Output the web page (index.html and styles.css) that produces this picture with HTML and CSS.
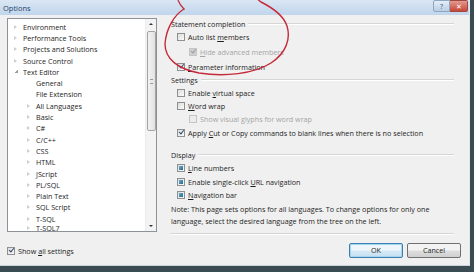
FILE: index.html
```html
<!DOCTYPE html>
<html lang="en">
<head>
    <meta charset="UTF-8">
    <meta name="viewport" content="width=device-width, initial-scale=1.0">
    <title>Options</title>

    <link rel="stylesheet" href="styles.css">
</head>
<body>

    <div class="window">
        <div class="titlebar">
            <span class="title">Options</span>
            <div class="caption-btns">
                <span class="cap-btn help">?</span>
                <span class="cap-btn close">&#x2715;</span>
            </div>
        </div>

        <div class="client">
            <!-- left: tree + show all -->
            <div class="left">
                <div class="tree">
                    <ul class="items">
                        <li class="node"><i class="arrow"></i>Environment</li>
                        <li class="node"><i class="arrow"></i>Performance Tools</li>
                        <li class="node"><i class="arrow"></i>Projects and Solutions</li>
                        <li class="node"><i class="arrow"></i>Source Control</li>
                        <li class="node"><i class="arrow open"></i>Text Editor</li>
                        <li class="child"><i class="arrow none"></i>General</li>
                        <li class="child"><i class="arrow none"></i>File Extension</li>
                        <li class="child"><i class="arrow"></i>All Languages</li>
                        <li class="child"><i class="arrow"></i>Basic</li>
                        <li class="child"><i class="arrow"></i>C#</li>
                        <li class="child"><i class="arrow"></i>C/C++</li>
                        <li class="child"><i class="arrow"></i>CSS</li>
                        <li class="child"><i class="arrow"></i>HTML</li>
                        <li class="child"><i class="arrow"></i>JScript</li>
                        <li class="child"><i class="arrow"></i>PL/SQL</li>
                        <li class="child"><i class="arrow"></i>Plain Text</li>
                        <li class="child"><i class="arrow"></i>SQL Script</li>
                        <li class="child"><i class="arrow"></i>T-SQL</li>
                        <li class="child last"><i class="arrow"></i>T-SQL7</li>
                    </ul>
                    <div class="scrollbar">
                        <span class="sb-arrow up"></span>
                        <div class="sb-track">
                            <div class="sb-thumb"><span class="grip"></span></div>
                        </div>
                        <span class="sb-arrow down"></span>
                    </div>
                </div>
                <label class="check show-all"><span class="box checked"></span><span>Show <u>a</u>ll settings</span></label>
            </div>

            <!-- right: option groups -->
            <div class="right">
                <div class="group first">
                    <div class="heading">Statement completion</div>
                    <label class="check tall"><span class="box"></span><span>Auto list <u>m</u>embers</span></label>
                    <label class="check tall sub disabled"><span class="box checked"></span><span><u>H</u>ide advanced members</span></label>
                    <label class="check tall"><span class="box checked"></span><span><u>P</u>arameter information</span></label>
                </div>

                <div class="group">
                    <div class="heading">Settings</div>
                    <label class="check"><span class="box"></span><span>Enable <u>v</u>irtual space</span></label>
                    <label class="check"><span class="box"></span><span><u>W</u>ord wrap</span></label>
                    <label class="check sub disabled"><span class="box"></span><span>Show visual glyphs for word wrap</span></label>
                    <label class="check"><span class="box checked"></span><span>Apply <u>C</u>ut or Copy commands to blank lines when there is no selection</span></label>
                </div>

                <div class="group display">
                    <div class="heading">Display</div>
                    <label class="check"><span class="box mixed"></span><span><u>L</u>ine numbers</span></label>
                    <label class="check"><span class="box mixed"></span><span>Enable single-click <u>U</u>RL navigation</span></label>
                    <label class="check"><span class="box mixed"></span><span><u>N</u>avigation bar</span></label>
                </div>

                <p class="note">Note: This page sets options for all languages. To change options for only one<br>language, select the desired language from the tree on the left.</p>

                <div class="separator"></div>

                <div class="buttons">
                    <button class="default">OK</button>
                    <button>Cancel</button>
                </div>
            </div>
        </div>

        <!-- red marker circle drawn over the dialog -->
        <svg class="scribble" width="474" height="272" viewBox="0 0 474 272">
            <path d="M184 9 C174 15 166 29 165 44 C165 59 178 69 199 73 C224 77 254 74 271 63 C286 53 291 39 287 26 C283 14 271 7 261 2 L256 -2"
                  fill="none" stroke="#c52a3a" stroke-width="1.4" stroke-linecap="round"/>
            <path d="M184 9 C181 6 179 3 178 0" fill="none" stroke="#c52a3a" stroke-width="1.2" stroke-linecap="round"/>
        </svg>
    </div>

</body>
</html>
```

FILE: styles.css
```css
/* page */
body {
    margin: 0;
    width: 474px;
    height: 272px;
    overflow: hidden;
    background-color: #3b4b52;
    font-family: "Open Sans", "Noto Sans", sans-serif;
    font-size: 7.2px;
    color: #1e1e1e;
}

.window {
    position: relative;
    width: 469px;
    height: 265px;
    background-color: #f0f0f0;
    border-right: 1px solid #dfe7ee;
    border-bottom: 1px solid #c9d3da;
}

/* title bar */
.titlebar {
    height: 15px;
    display: flex;
    align-items: center;
    justify-content: space-between;
    padding: 0 1px 0 3px;
    background: linear-gradient(#dae6f3, #c0d5ec);
}

.title {
    color: #1d3f66;
    font-size: 7.5px;
}

.caption-btns {
    display: flex;
    align-items: center;
    margin-top: -3px;
}

.cap-btn {
    display: flex;
    align-items: center;
    justify-content: center;
    height: 10px;
    font-size: 7px;
    line-height: 1;
    border: 1px solid #8ea6bf;
}

.help {
    width: 15px;
    color: #3d5d80;
    background: linear-gradient(#e5eef8, #b9cde3);
    border-radius: 2px 0 0 2px;
}

.close {
    width: 17px;
    color: #fff;
    background: linear-gradient(#e59a8e, #c7473a);
    border-color: #9c4a40;
    border-left: none;
    border-radius: 0 2px 2px 0;
}

/* client area */
.client {
    display: flex;
    padding-top: 3px;
}

.left {
    display: flex;
    flex-direction: column;
    margin-left: 7px;
    width: 150px;
}

/* tree */
.tree {
    display: flex;
    height: 212px;
    background-color: #fff;
    border: 1px solid #8d9299;
}

.items {
    flex: 1;
    list-style: none;
    margin: 0;
    padding: 2px 0 0 0;
    overflow: hidden;
}

.items li {
    display: flex;
    align-items: center;
    height: 11.3px;
    white-space: nowrap;
}

.items li.last {
    height: 8px;
    align-items: flex-start;
    overflow: hidden;
    line-height: 9px;
    margin-top: -0.5px;
}

.node {
    padding-left: 6px;
}

.child {
    padding-left: 19px;
}

.arrow {
    display: inline-block;
    width: 0;
    height: 0;
    margin-right: 6px;
    border-left: 3px solid #cfcfcf;
    border-top: 2.5px solid transparent;
    border-bottom: 2.5px solid transparent;
}

.last .arrow {
    margin-top: 2px;
}

.arrow.open {
    border: none;
    width: 3px;
    height: 3px;
    margin-left: 1px;
    margin-right: 5px;
    background: linear-gradient(135deg, transparent 50%, #9a9a9a 50%);
}

.arrow.none {
    border-left-color: transparent;
}

/* scrollbar */
.scrollbar {
    width: 10px;
    display: flex;
    flex-direction: column;
    align-items: center;
    background-color: #f3f3f3;
    border-left: 1px solid #ececec;
}

.sb-arrow {
    width: 0;
    height: 0;
    margin: 4px 0;
    border-left: 2px solid transparent;
    border-right: 2px solid transparent;
}

.sb-arrow.up {
    border-bottom: 2px solid #333;
}

.sb-arrow.down {
    border-top: 2px solid #333;
}

.sb-track {
    flex: 1;
    width: 100%;
    display: flex;
    justify-content: center;
}

.sb-thumb {
    width: 7px;
    height: 98px;
    margin-top: 2px;
    display: flex;
    align-items: center;
    justify-content: center;
    border: 1px solid #a3a3a3;
    border-radius: 2px;
    background: linear-gradient(90deg, #f2f2f2, #e2e2e2);
}

.grip {
    width: 3px;
    height: 3px;
    border-top: 1px solid #9a9a9a;
    border-bottom: 1px solid #9a9a9a;
}

/* checkboxes */
.check {
    display: flex;
    align-items: center;
    white-space: nowrap;
}

.box {
    position: relative;
    flex: none;
    width: 6px;
    height: 6px;
    margin-right: 3px;
    border: 1px solid #8e8f8f;
    background: linear-gradient(135deg, #dcdcdc, #fbfbfb);
}

.box.checked::after {
    content: "";
    position: absolute;
    left: 1.5px;
    top: -0.5px;
    width: 1.8px;
    height: 4px;
    border-right: 1.3px solid #26436b;
    border-bottom: 1.3px solid #26436b;
    transform: rotate(40deg);
}

.box.mixed::after {
    content: "";
    position: absolute;
    left: 1px;
    top: 1px;
    width: 4px;
    height: 4px;
    background: linear-gradient(135deg, #6db1cf, #1d6790);
}

.disabled {
    color: #a5a5a5;
}

.disabled .box {
    border-color: #c4c4c4;
    background: #ececec;
}

.disabled .box.checked {
    background: #cfcfcf;
}

.disabled .box.checked::after {
    border-color: #9b9b9b;
}

.show-all {
    height: 10px;
    margin-top: 12px;
}

/* right column */
.right {
    display: flex;
    flex-direction: column;
    margin-left: 13px;
    width: 291px;
}

.group {
    display: flex;
    flex-direction: column;
}

.display {
    margin-top: 9px;
}

.heading {
    display: flex;
    align-items: center;
    height: 12px;
    padding-left: 1px;
    margin-right: 7px;
}

.heading::after {
    content: "";
    flex: 1;
    margin-left: 3px;
    border-top: 1px solid #d5d5d5;
    border-bottom: 1px solid #fff;
}

.check {
    height: 13.4px;
    padding-left: 7px;
}

.check.tall {
    height: 15px;
}

.check.sub {
    padding-left: 19px;
}

.first .heading {
    margin-bottom: -1px;
}

.display .heading {
    margin-bottom: 1px;
}

.left .check {
    padding-left: 0;
}

.note {
    margin: 1px 0 0 1px;
    line-height: 12px;
}

.separator {
    margin: 6px 7px 0 0;
    border-top: 1px solid #d5d5d5;
    border-bottom: 1px solid #fff;
}

.buttons {
    display: flex;
    justify-content: flex-end;
    gap: 4px;
    margin-top: 8px;
}

button {
    width: 54px;
    height: 15px;
    padding: 0;
    font-family: inherit;
    font-size: 7.2px;
    color: #1e1e1e;
    border: 1px solid #707070;
    border-radius: 2px;
    background: linear-gradient(#f3f3f3 45%, #dddddd 55%, #d0d0d0);
}

button.default {
    border-color: #3c7fb1;
    box-shadow: inset 0 0 0 1px #a6d4ef;
    background: linear-gradient(#eef6fb 45%, #d6e9f5 55%, #c4dff1);
}

/* marker overlay */
.scribble {
    position: absolute;
    top: 0;
    left: 0;
    pointer-events: none;
}
```
